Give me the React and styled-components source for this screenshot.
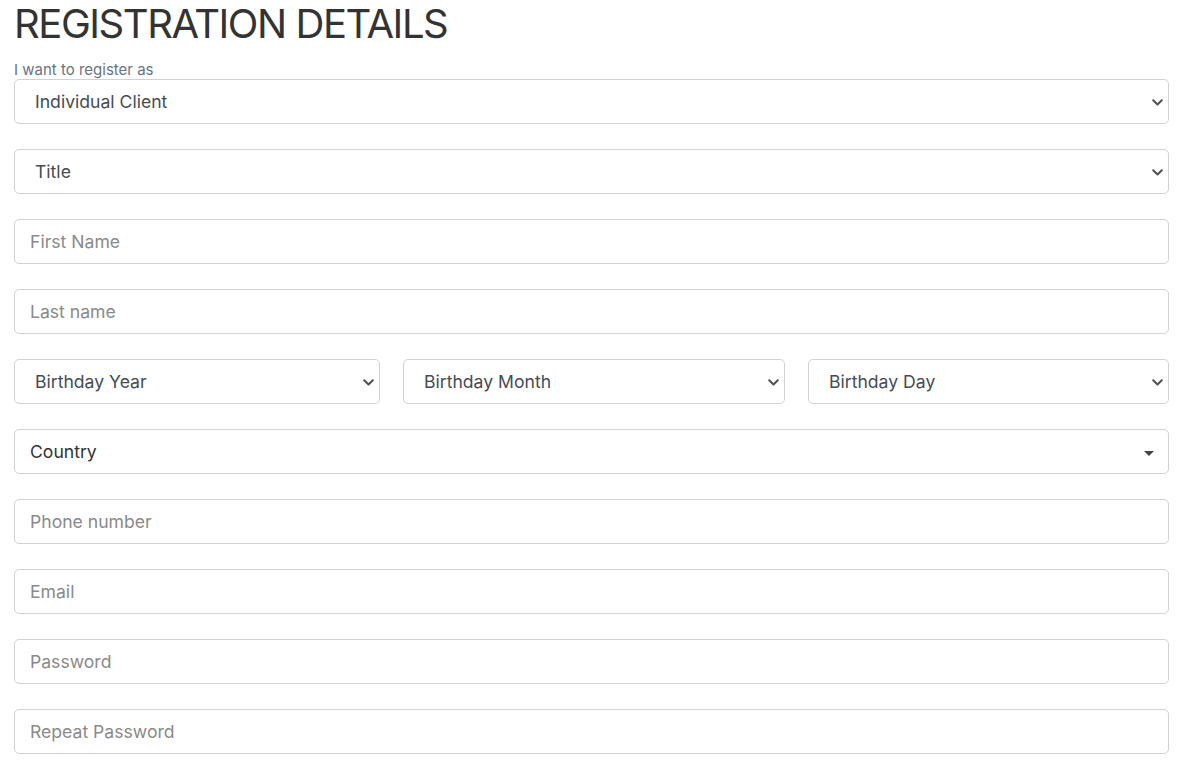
import React from "react";
import styled, { createGlobalStyle } from "styled-components";

const Global = createGlobalStyle`
  html, body { margin: 0; padding: 0; background: #fff; }
  body { font-family: Inter, "Noto Sans", sans-serif; }
  * { box-sizing: border-box; }
`;

const Page = styled.div`
  padding: 0 21px 0 14px;
`;

const Heading = styled.h1`
  margin: 0;
  font-size: 40px;
  line-height: 48px;
  font-weight: 400;
  color: #333;
  letter-spacing: -1.45px;
`;

const Label = styled.label`
  display: block;
  margin-top: 13px;
  font-size: 15px;
  line-height: 18px;
  color: #6b7280;
`;

const Group = styled.div`
  margin-bottom: 25px;
`;

const fieldBase = `
  display: block;
  width: 100%;
  height: 45px;
  border: 1px solid #d2d2d2;
  border-radius: 5px;
  background: #fff;
  font-family: Inter, "Noto Sans", sans-serif;
  font-size: 17.6px;
  padding: 0 15px;
  outline: none;
`;

const SelectWrap = styled.div`
  position: relative;
`;

const Select = styled.select`
  ${fieldBase}
  appearance: none;
  -webkit-appearance: none;
  color: #464b55;
  padding: 0 30px 0 20px;
`;

const Chevron = styled.svg`
  position: absolute;
  right: 6px;
  top: 50%;
  margin-top: -3px;
  width: 11px;
  height: 7px;
  pointer-events: none;
`;

const Input = styled.input`
  ${fieldBase}
  color: #333;
  &::placeholder { color: #8a8a8a; opacity: 1; }
`;

const Row = styled.div`
  display: grid;
  grid-template-columns: 366fr 382fr 361fr;
  column-gap: 23px;
  margin-bottom: 25px;
`;

const Combo = styled.div`
  ${fieldBase}
  position: relative;
  display: flex;
  align-items: center;
  color: #333;
`;

const Caret = styled.span`
  position: absolute;
  right: 14px;
  top: 50%;
  margin-top: -1px;
  width: 0;
  height: 0;
  border-left: 5px solid transparent;
  border-right: 5px solid transparent;
  border-top: 5px solid #444;
`;

function Dropdown({ options }) {
  return (
    <SelectWrap>
      <Select defaultValue={options[0]}>
        {options.map((o) => (
          <option key={o} value={o}>
            {o}
          </option>
        ))}
      </Select>
      <Chevron viewBox="0 0 11 7">
        <path d="M1.2 1.2l4.3 4.3 4.3-4.3" fill="none" stroke="#505050" strokeWidth="2" strokeLinecap="round" strokeLinejoin="round" />
      </Chevron>
    </SelectWrap>
  );
}

export default function App() {
  return (
    <>
      <Global />
      <Page>
        <Heading>REGISTRATION DETAILS</Heading>
        <Label>I want to register as</Label>
        <Group>
          <Dropdown options={["Individual Client", "Corporate Client"]} />
        </Group>
        <Group>
          <Dropdown options={["Title", "Mr", "Mrs", "Ms"]} />
        </Group>
        <Group>
          <Input placeholder="First Name" />
        </Group>
        <Group>
          <Input placeholder="Last name" />
        </Group>
        <Row>
          <Dropdown options={["Birthday Year"]} />
          <Dropdown options={["Birthday Month"]} />
          <Dropdown options={["Birthday Day"]} />
        </Row>
        <Group>
          <Combo>
            Country
            <Caret />
          </Combo>
        </Group>
        <Group>
          <Input placeholder="Phone number" />
        </Group>
        <Group>
          <Input placeholder="Email" />
        </Group>
        <Group>
          <Input type="password" placeholder="Password" />
        </Group>
        <Group>
          <Input type="password" placeholder="Repeat Password" />
        </Group>
      </Page>
    </>
  );
}
